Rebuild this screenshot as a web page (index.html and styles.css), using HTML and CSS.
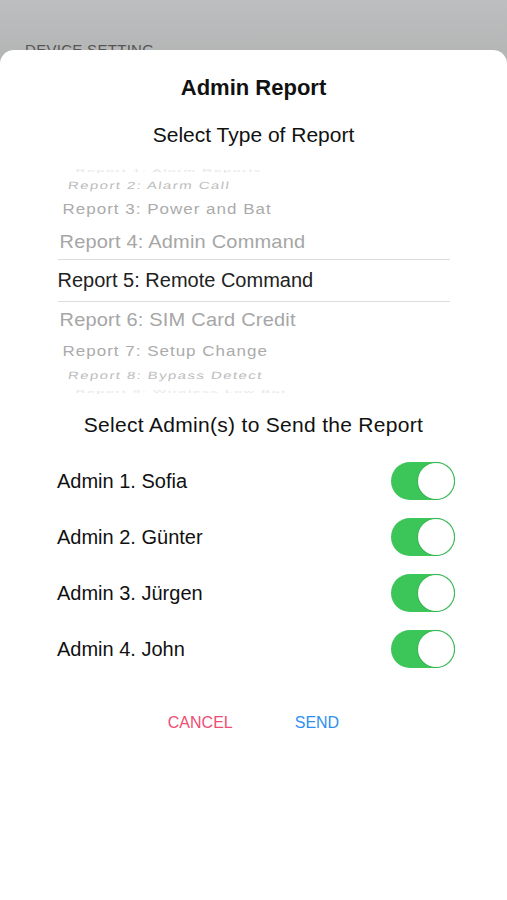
FILE: index.html
```html
<!DOCTYPE html>
<html lang="en">
<head>
    <meta charset="UTF-8">
    <meta name="viewport" content="width=device-width, initial-scale=1.0">
    <title>Admin Report</title>
    <link rel="stylesheet" href="styles.css">
</head>
<body>
    <div class="backdrop">
        <div class="backdrop-label">DEVICE SETTING</div>
    </div>

    <div class="sheet">
        <h2 class="sheet-title">Admin Report</h2>
        <div class="sheet-subtitle">Select Type of Report</div>

        <div class="picker">
            <div class="picker-row far-2"><span>Report 1: Alarm Reports</span></div>
            <div class="picker-row far-1"><span>Report 2: Alarm Call</span></div>
            <div class="picker-row near-2"><span>Report 3: Power and Bat</span></div>
            <div class="picker-row near-1"><span>Report 4: Admin Command</span></div>
            <div class="picker-row selected"><span>Report 5: Remote Command</span></div>
            <div class="picker-row near-1"><span>Report 6: SIM Card Credit</span></div>
            <div class="picker-row near-2"><span>Report 7: Setup Change</span></div>
            <div class="picker-row far-1"><span>Report 8: Bypass Detect</span></div>
            <div class="picker-row far-2"><span>Report 9: Wireless Low Bat</span></div>
        </div>

        <div class="section-title">Select Admin(s) to Send the Report</div>

        <div class="admin-list">
            <div class="admin-row">
                <span>Admin 1. Sofia</span>
                <div class="switch on"><div class="knob"></div></div>
            </div>
            <div class="admin-row">
                <span>Admin 2. Günter</span>
                <div class="switch on"><div class="knob"></div></div>
            </div>
            <div class="admin-row">
                <span>Admin 3. Jürgen</span>
                <div class="switch on"><div class="knob"></div></div>
            </div>
            <div class="admin-row">
                <span>Admin 4. John</span>
                <div class="switch on"><div class="knob"></div></div>
            </div>
        </div>

        <div class="actions">
            <button class="action cancel">CANCEL</button>
            <button class="action send">SEND</button>
        </div>
    </div>
</body>
</html>
```

FILE: styles.css
```css
* {
  box-sizing: border-box;
  margin: 0;
  padding: 0;
}

body {
  font-family: "Liberation Sans", Arial, sans-serif;
  color: #111;
  width: 507px;
  height: 900px;
  overflow: hidden;
  position: relative;
  background: linear-gradient(to bottom, #bdbebf 0px, #b3b4b4 60px, #b3b4b4 100%);
}

/* Page behind the sheet */
.backdrop {
  padding: 41px 0 0 25px;
}

.backdrop-label {
  font-size: 15px;
  letter-spacing: 0.3px;
  color: #555;
}

/* Bottom sheet */
.sheet {
  position: absolute;
  top: 50px;
  left: 0;
  right: 0;
  bottom: 0;
  background: #fff;
  border-radius: 14px 14px 0 0;
  display: flex;
  flex-direction: column;
  align-items: center;
}

.sheet-title {
  margin-top: 25px;
  font-size: 22px;
  line-height: 26px;
  font-weight: bold;
  color: #111;
}

.sheet-subtitle {
  margin-top: 21px;
  font-size: 21px;
  line-height: 26px;
  color: #111;
}

/* Wheel picker */
.picker {
  margin-top: 16px;
  width: 392px;
  display: flex;
  flex-direction: column;
}

.picker-row {
  display: flex;
  align-items: center;
  white-space: nowrap;
  overflow: hidden;
  color: #a9a9a9;
}

.picker-row span {
  display: inline-block;
  transform-origin: left center;
}

.picker-row.selected {
  height: 43px;
  border-top: 1px solid #dcdcdc;
  border-bottom: 1px solid #dcdcdc;
  color: #222;
  font-size: 20px;
}

.picker-row.near-1 {
  height: 35px;
  font-size: 20px;
  padding-left: 2px;
  color: #a6a6a6;
}

.picker-row.near-1 span {
  transform: scaleY(0.94);
  letter-spacing: 0.2px;
}

.picker-row.near-2 {
  height: 29px;
  font-size: 17px;
  padding-left: 5px;
  color: #ababab;
}

.picker-row.near-2 span {
  transform: scaleY(0.86);
  letter-spacing: 1px;
}

.picker-row.far-1 {
  height: 19px;
  font-size: 15px;
  padding-left: 10px;
  color: #bdbdbd;
}

.picker-row.far-1 span {
  transform: scaleY(0.7) skewX(-6deg);
  letter-spacing: 1.4px;
}

.picker-row.far-2 {
  height: 12px;
  font-size: 14px;
  padding-left: 18px;
  color: #e6e6e6;
}

.picker-row.far-2 span {
  transform: scaleY(0.3);
  letter-spacing: 1.6px;
}

.section-title {
  margin-top: 15px;
  font-size: 21px;
  line-height: 26px;
  letter-spacing: 0.3px;
  color: #111;
}

/* Admin switches */
.admin-list {
  margin-top: 15px;
  width: 100%;
  padding: 0 52px 0 57px;
}

.admin-row {
  height: 56px;
  display: flex;
  align-items: center;
  justify-content: space-between;
  font-size: 20px;
  color: #111;
}

.switch {
  width: 64px;
  height: 38px;
  border-radius: 19px;
  background: #3cc65a;
  display: flex;
  align-items: center;
  justify-content: flex-end;
  padding: 1px;
}

.knob {
  width: 36px;
  height: 36px;
  border-radius: 50%;
  background: #fff;
  box-shadow: 0 0 0 1px #35b752;
}

/* Actions */
.actions {
  margin-top: 36px;
  display: flex;
  gap: 62px;
}

.action {
  border: none;
  background: none;
  font-family: "Liberation Sans", Arial, sans-serif;
  font-size: 16px;
  line-height: 20px;
  cursor: pointer;
}

.cancel {
  color: #ef4d72;
}

.send {
  color: #2f8ff0;
}
```
